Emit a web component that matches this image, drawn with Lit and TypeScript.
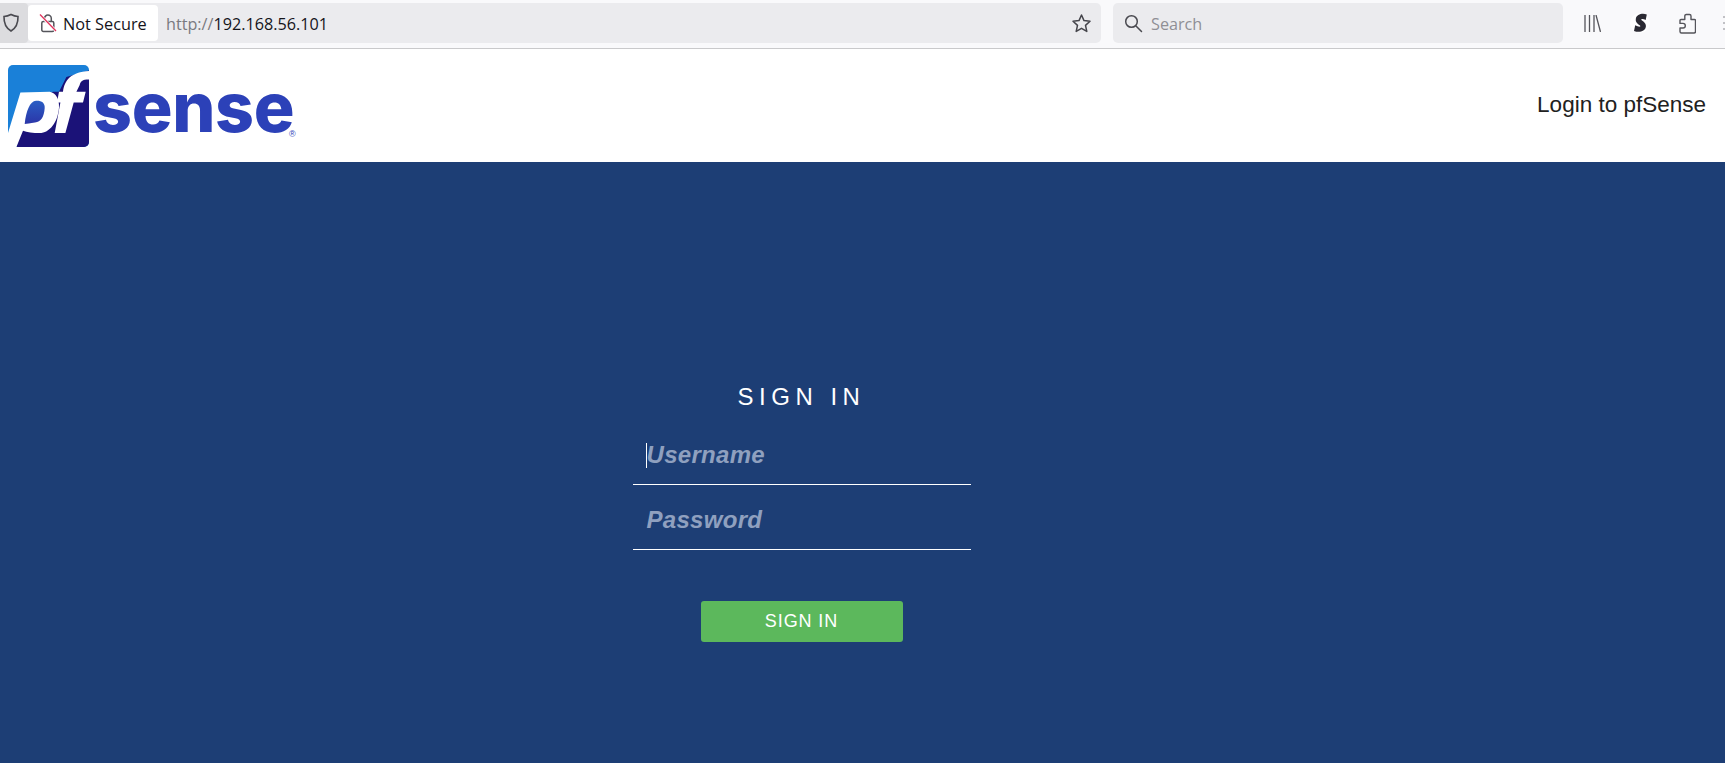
import { LitElement, html, css } from "lit";
import { customElement } from "lit/decorators.js";

@customElement("app-root")
export class AppRoot extends LitElement {
  static styles = css`
    :host { display: flex; flex-direction: column; height: 763px; overflow: hidden; font-family: "Liberation Sans", Arial, sans-serif; }
    .chrome { height: 48px; flex: none; box-sizing: border-box; background: #f9f9fb; display: flex; align-items: center; padding-bottom: 2px; font-family: "Open Sans", "Noto Sans", sans-serif; }
    .rule { height: 1px; background: #c9c9cb; flex: none; }
    .urlbar { width: 1101px; height: 40px; background: #ebebee; border-radius: 0 5px 5px 0; display: flex; align-items: center; flex: none; }
    .shield { width: 28px; height: 40px; box-sizing: border-box; padding-left: 2px; background: #dcdcdf; border-radius: 0 4px 4px 0; display: flex; align-items: center; flex: none; }
    .secure { width: 130px; height: 36px; box-sizing: border-box; background: #fff; border-radius: 4px; display: flex; align-items: center; padding-left: 11px; gap: 6px; font-size: 16.3px; color: #15141a; flex: none; }
    .secure span, .url, .search span { padding-top: 2px; }
    .url { margin-left: 8px; font-size: 16.2px; color: #15141a; flex: 1; }
    .url span { color: #7a7a80; }
    .star { margin-right: 9px; display: block; }
    .search { margin-left: 12px; width: 450px; height: 40px; background: #ebebee; border-radius: 5px; display: flex; align-items: center; padding-left: 11px; gap: 8px; box-sizing: border-box; font-size: 16.2px; color: #8f8f95; flex: none; }
    .tools { flex: 1; display: flex; align-items: center; padding-left: 21px; overflow: hidden; }
    .tools svg { display: block; flex: none; }
    .lib { margin-right: 29px; }
    .sbadge { width: 20px; height: 20px; border-radius: 50%; background: #fff; display: flex; align-items: center; justify-content: center; flex: none; margin-right: 28px; }
    .puzzle { margin-right: 27px; }
    header { height: 113px; flex: none; box-sizing: border-box; background: #fff; display: flex; align-items: flex-start; justify-content: space-between; padding: 16px 19px 0 8px; }
    .logo { position: relative; height: 82px; width: 295px; }
    .mark { width: 82px; height: 82px; display: block; }
    .word { position: absolute; left: 85px; top: 22px; font-family: Inter, sans-serif; font-weight: 800; font-size: 68px; line-height: 40px; letter-spacing: -0.3px; color: #2c41b8; }
    .reg { position: absolute; left: 281px; top: 64px; font-size: 9px; line-height: 10px; color: #2c41b8; }
    .title { font-size: 22.5px; color: #212121; align-self: center; margin-top: -18px; }
    main { flex: 1; background: #1d3e75; display: flex; flex-direction: column; align-items: center; padding: 220px 122px 0 0; }
    h1 { margin: 0; font-weight: 400; font-size: 24px; line-height: 30px; letter-spacing: 5.5px; color: #fff; }
    form { width: 338px; display: flex; flex-direction: column; margin: 17px 0 0; }
    .field { box-sizing: border-box; border-bottom: 1px solid #fff; display: flex; align-items: center; padding: 0 14px; font-style: italic; font-weight: 700; font-size: 24px; letter-spacing: 0.3px; color: #8fa0bf; }
    .first { height: 56px; padding-bottom: 4px; position: relative; }
    .second { height: 65px; padding-top: 6px; }
    .caret { position: absolute; left: 13px; top: 14px; width: 1px; height: 25px; background: #fff; }
    button { align-self: center; margin-top: 51px; width: 202px; height: 41px; border: 0; border-radius: 3px; background: #5cb85c; color: #fff; font: 400 18px "Liberation Sans", Arial, sans-serif; letter-spacing: 0.9px; padding: 0; }
  `;

  render() {
    return html`
      <div class="chrome">
        <div class="urlbar">
          <div class="shield">
            <svg width="18" height="20" viewBox="0 0 18 20" fill="none" stroke="#4a4a50" stroke-width="1.6"><path d="M9 1.5c2.5 1.2 4.7 1.8 7 2 .2 6.5-1.8 11.5-7 14.5C3.8 15 1.800 10 2 3.5c2.3-.2 4.5-.8 7-2z"/></svg>
          </div>
          <div class="secure">
            <svg width="18" height="20" viewBox="0 0 18 20" fill="none"><rect x="2.8" y="8.5" width="12" height="10" rx="1.5" stroke="#55555b" stroke-width="1.5"/><path d="M5.5 8.500V5.500a3.4 3.4 0 0 1 6.800 0v3" stroke="#55555b" stroke-width="1.5"/><path d="M1 2l16 16" stroke="#fff" stroke-width="3"/><path d="M1 1.500l16 16.500" stroke="#e0325a" stroke-width="1.3"/></svg>
            <span>Not Secure</span>
          </div>
          <div class="url"><span>http://</span>192.168.56.101</div>
          <svg class="star" width="21" height="21" viewBox="0 0 21 21" fill="none" stroke="#45454b" stroke-width="1.5" stroke-linejoin="round"><path d="M10.5 2l2.500 5.600 6 .7-4.500 4.100 1.300 6L10.500 15.300 5.200 18.400l1.300-6L2 8.300l6-.7z"/></svg>
        </div>
        <div class="search">
          <svg width="19" height="19" viewBox="0 0 19 19" fill="none" stroke="#4a4a50" stroke-width="1.5"><circle cx="7.5" cy="7.5" r="5.800"/><path d="M12 12l5.500 5.500" stroke-linecap="round"/></svg>
          <span>Search</span>
        </div>
        <div class="tools">
          <svg class="lib" width="17" height="17" viewBox="0 0 17 17" stroke="#55555b" stroke-width="1.3" fill="none"><path d="M1 0v17M5.500 0v17M10 0v17M12 0l4.500 17"/></svg>
          <div class="sbadge"><svg width="15" height="20" viewBox="0 0 14 20"><path d="M13.300 1.500 12.200 7C10 5.900 8 5.600 7.800 6.400 7.500 7.600 13 8.800 12.400 13.600 11.700 19 5 19.800.5 18L1.700 12.200C4 13.600 6.700 14.100 6.900 13.200 7.200 11.900 1.600 10.700 2.300 5.900 3 .8 9.500 0 13.300 1.500z" fill="#2b2a33"/></svg></div>
          <svg class="puzzle" width="18" height="21" viewBox="0 0 18 21" fill="none" stroke="#55555b" stroke-width="1.4" stroke-linejoin="round"><path d="M8.500 1.500h3a1.500 1.500 0 0 1 1.500 1.500v3.500h3.500a1 1 0 0 1 1 1V18.500a1.500 1.500 0 0 1-1.500 1.500H3.500a1.500 1.500 0 0 1-1.500-1.500V15H5a2.300 2.300 0 0 0 0-4.600H2V7.500a1 1 0 0 1 1-1h3.800V3A1.500 1.500 0 0 1 8.500 1.500z"/></svg>
          <svg width="3" height="14" viewBox="0 0 3 14" stroke="#8a8a90" stroke-width="1.2"><path d="M0 1h3M0 7h3M0 13h3"/></svg>
        </div>
      </div>
      <div class="rule"></div>
      <header>
        <div class="logo">
          <svg class="mark" viewBox="0 0 82 82">
            <defs>
              <clipPath id="c"><path d="M5 0H76a5 5 0 0 1 5 5V77a5 5 0 0 1-5 5H8.400L0 68V5a5 5 0 0 1 5-5z"/></clipPath>
              <linearGradient id="cnt" x1="0" y1="0" x2="0" y2="1"><stop offset="0" stop-color="#2a5ec4"/><stop offset="1" stop-color="#2b35a8"/></linearGradient>
            </defs>
            <g clip-path="url(#c)">
              <rect width="82" height="82" fill="#1a80d8"/>
              <path d="M8.400 82 20 40 45 26.700H51L58.400 12 81 5.500V82z" fill="#1b1278"/>
            </g>
            <path d="M0 68 12.400 27.400 41.700 26.700C48 28 51.500 34 51 42.400 50 57 41.500 68 31.700 68 25 68 19 67.500 15 65.700L8.400 82H0z" fill="#fff"/>
            <path d="M16.700 59C18 46 22 36 28 35.700 34 35.500 37 38 36.700 43 36 52 33 57 27 57.500 22 58 19 59 16.700 59z" fill="url(#cnt)"/>
            <path d="M46.700 68 52.400 37.400H49L51 26.700H55C56.500 15 63 7 81 6V14.500C74 14.500 72.500 16.500 71.700 20L68.400 26.700H77.700L75 37.400H65.700L57.400 68z" fill="#fff"/>
          </svg>
          <span class="word">sense</span>
          <span class="reg">®</span>
        </div>
        <div class="title">Login to pfSense</div>
      </header>
      <main>
        <h1>SIGN IN</h1>
        <form>
          <div class="field first"><span class="caret"></span>Username</div>
          <div class="field second">Password</div>
          <button type="button">SIGN IN</button>
        </form>
      </main>
    `;
  }
}
